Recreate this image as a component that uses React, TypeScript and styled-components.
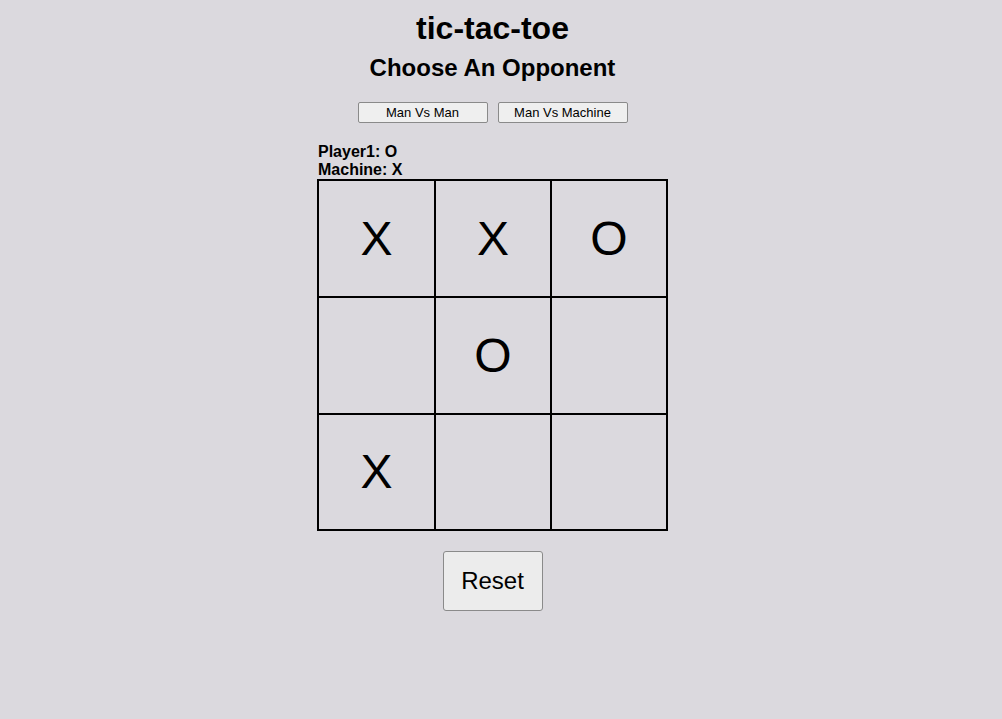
import React from "react";
import styled, { createGlobalStyle } from "styled-components";

const Global = createGlobalStyle`
  html, body { margin: 0; padding: 0; background: #dbd9de; }
  body { font-family: "Liberation Sans", Arial, sans-serif; color: #000; }
`;

const Page = styled.div`
  width: 985px;
  display: flex;
  flex-direction: column;
  align-items: center;
`;

const Title = styled.h1`
  margin: 10px 0 0;
  font-size: 32px;
  line-height: 37px;
  font-weight: bold;
`;

const Subtitle = styled.h2`
  margin: 7px 0 0;
  font-size: 24px;
  line-height: 28px;
  font-weight: bold;
`;

const ModeRow = styled.div`
  display: flex;
  gap: 10px;
  margin-top: 20px;
`;

const ModeButton = styled.button`
  width: 130px;
  height: 21px;
  padding: 0;
  font-family: "Liberation Sans", Arial, sans-serif;
  font-size: 13px;
  background: #efefef;
  border: 1px solid #8a8a8a;
  border-radius: 2px;
  color: #000;
`;

const Board = styled.div`
  margin-top: 20px;
  display: flex;
  flex-direction: column;
`;

const Info = styled.div`
  font-size: 16px;
  font-weight: bold;
  line-height: 18px;
  padding-left: 1px;
`;

const Grid = styled.div`
  display: grid;
  grid-template-columns: 115px 114px 114px;
  grid-template-rows: 115px 115px 114px;
  gap: 2px;
  border: 2px solid #000;
  background: #000;
`;

const Cell = styled.div`
  background: #dbd9de;
  display: flex;
  align-items: center;
  justify-content: center;
  font-size: 48px;
  line-height: 1;
`;

const ResetButton = styled.button`
  margin-top: 20px;
  width: 100px;
  height: 60px;
  font-family: "Liberation Sans", Arial, sans-serif;
  font-size: 24px;
  background: #ececec;
  border: 1px solid #8a8a8a;
  border-radius: 3px;
  color: #000;
`;

const cells = ["X", "X", "O", "", "O", "", "X", "", ""];

export default function App() {
  return (
    <>
      <Global />
      <Page>
        <Title>tic-tac-toe</Title>
        <Subtitle>Choose An Opponent</Subtitle>
        <ModeRow>
          <ModeButton>Man Vs Man</ModeButton>
          <ModeButton>Man Vs Machine</ModeButton>
        </ModeRow>
        <Board>
          <Info>Player1: O</Info>
          <Info>Machine: X</Info>
          <Grid>
            {cells.map((c, i) => (
              <Cell key={i}>{c}</Cell>
            ))}
          </Grid>
        </Board>
        <ResetButton>Reset</ResetButton>
      </Page>
    </>
  );
}
